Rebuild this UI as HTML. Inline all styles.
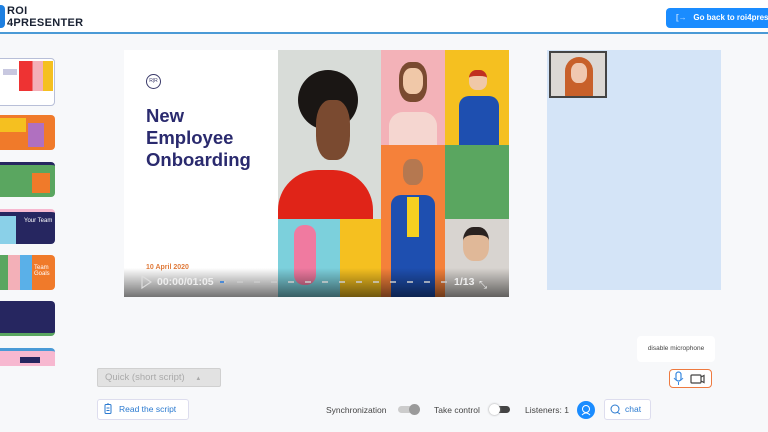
<!DOCTYPE html>
<html><head><meta charset="utf-8"><style>
*{margin:0;padding:0;box-sizing:border-box}
body{width:768px;height:432px;overflow:hidden;background:#f7f8fa;font-family:"Liberation Sans",sans-serif;position:relative}
.a{position:absolute}
.hdr{left:0;top:0;width:768px;height:34px;background:#fff;border-bottom:2px solid #4a9ad6}
.t{border-radius:4px;overflow:hidden}
</style></head><body>
<div class="a hdr"></div>
<div class="a" style="left:-6px;top:5px;width:11px;height:23px;background:#1e7fe0;border-radius:4px"></div>
<div class="a" style="left:7px;top:5px;font-weight:bold;font-size:11px;line-height:12px;color:#1a2233;letter-spacing:.3px">ROI<br>4PRESENTER</div>
<div class="a" style="left:666px;top:8px;width:110px;height:20px;background:#1a8cff;border-radius:4px;color:#fff;font-size:8px;font-weight:bold;line-height:20px;padding-left:10px;white-space:nowrap"><span style="opacity:.7">[→</span>&nbsp;&nbsp; Go back to roi4prese</div>

<div class="a t" style="left:-4px;top:58px;width:59px;height:48px;background:#fff;border:1px solid #b8bfd8">
 <div class="a" style="left:22px;top:2px;width:34px;height:30px;background:linear-gradient(90deg,#e33 0 40%,#f3b0b8 40% 70%,#f5c020 70%)"></div>
 <div class="a" style="left:6px;top:10px;width:14px;height:6px;background:#c8c8e0"></div>
</div>
<div class="a t" style="left:-4px;top:115px;width:59px;height:35px;background:#f07a2a"><div class="a" style="left:4px;top:3px;width:26px;height:14px;background:#f5c020"></div><div class="a" style="left:32px;top:8px;width:16px;height:24px;background:#b070c0"></div></div>
<div class="a t" style="left:-4px;top:162px;width:59px;height:35px;background:#5aa660;border-top:3px solid #262660"><div class="a" style="left:36px;top:8px;width:18px;height:20px;background:#f07a2a"></div></div>
<div class="a t" style="left:-4px;top:209px;width:59px;height:35px;background:#262660;border-top:3px solid #f7b8d0"><div class="a" style="left:0;top:4px;width:20px;height:28px;background:#8ad0e8"></div><div class="a" style="left:28px;top:6px;font-size:6px;color:#fff">Your Team</div></div>
<div class="a t" style="left:-4px;top:255px;width:59px;height:35px;background:#f07a2a"><div class="a" style="left:0;top:0;width:36px;height:35px;background:linear-gradient(90deg,#5aa660 0 33%,#f3b0b8 33% 66%,#5ab0e8 66%)"></div><div class="a" style="left:38px;top:10px;font-size:6px;color:#fff">Team Goals</div></div>
<div class="a t" style="left:-4px;top:301px;width:59px;height:35px;background:#262660;border-bottom:3px solid #5aa660"></div>
<div class="a" style="left:-4px;top:348px;width:59px;height:18px;background:#f7b8d0;border-top:3px solid #4a9ad6;border-radius:4px 4px 0 0"><div class="a" style="left:24px;top:6px;width:20px;height:6px;background:#262660"></div></div>

<div class="a" style="left:124px;top:50px;width:385px;height:247px;background:#fff;overflow:hidden">
 <div class="a" style="left:22px;top:24px;width:15px;height:15px;border:1px solid #3a3a6a;border-radius:50%;font-size:5px;text-align:center;line-height:13px;color:#3a3a6a">R|R</div>
 <div class="a" style="left:22px;top:55px;font-size:18.5px;font-weight:bold;line-height:22px;color:#2a2a6e">New<br>Employee<br>Onboarding</div>
 <div class="a" style="left:22px;top:214px;font-size:7px;font-weight:bold;color:#e07a3a">10 April 2020</div>
 <div class="a" style="left:154px;top:0;width:103px;height:169px;background:#d8dcd8">
   <div class="a" style="left:20px;top:20px;width:60px;height:60px;background:#1a1614;border-radius:50%"></div>
   <div class="a" style="left:38px;top:50px;width:34px;height:60px;background:#7a4a30;border-radius:40%"></div>
   <div class="a" style="left:0;top:120px;width:95px;height:49px;background:#e02418;border-radius:40px 40px 0 0"></div>
 </div>
 <div class="a" style="left:154px;top:169px;width:62px;height:78px;background:#7cd0dc"><div class="a" style="left:16px;top:6px;width:22px;height:60px;background:#f07aa0;border-radius:10px"></div></div>
 <div class="a" style="left:216px;top:169px;width:41px;height:78px;background:#f5c020"></div>
 <div class="a" style="left:257px;top:0;width:64px;height:95px;background:#f3b2b8">
   <div class="a" style="left:18px;top:12px;width:28px;height:40px;background:#7a4a30;border-radius:40%"></div>
   <div class="a" style="left:22px;top:18px;width:20px;height:26px;background:#f0c8a8;border-radius:40%"></div>
   <div class="a" style="left:8px;top:62px;width:48px;height:33px;background:#f5d6d0;border-radius:14px 14px 0 0"></div>
 </div>
 <div class="a" style="left:257px;top:95px;width:64px;height:152px;background:#f5813a">
   <div class="a" style="left:22px;top:14px;width:20px;height:26px;background:#b57850;border-radius:40%"></div>
   <div class="a" style="left:10px;top:50px;width:44px;height:102px;background:#1e4fb0;border-radius:10px 10px 0 0"></div>
   <div class="a" style="left:26px;top:52px;width:12px;height:40px;background:#f5d020"></div>
 </div>
 <div class="a" style="left:321px;top:0;width:64px;height:95px;background:#f5c020">
   <div class="a" style="left:24px;top:20px;width:18px;height:20px;background:#f0c8a8;border-radius:40%;border-top:6px solid #c03020"></div>
   <div class="a" style="left:14px;top:46px;width:40px;height:49px;background:#1e4fb0;border-radius:10px 10px 0 0"></div>
 </div>
 <div class="a" style="left:321px;top:95px;width:64px;height:74px;background:#5aa660"></div>
 <div class="a" style="left:321px;top:169px;width:64px;height:78px;background:#d8d4d0"><div class="a" style="left:18px;top:8px;width:26px;height:34px;background:#e0b898;border-radius:40%;border-top:8px solid #2a2220"></div></div>
 <div class="a" style="left:0;top:218px;width:385px;height:29px;background:linear-gradient(rgba(0,0,0,0),rgba(0,0,0,.55))"></div>
 <svg class="a" style="left:16px;top:225px" width="12" height="14"><path d="M2 1 L11 7 L2 13 Z" fill="none" stroke="#ddd" stroke-width="1.2"/></svg>
 <div class="a" style="left:33px;top:226px;font-size:10.5px;font-weight:bold;color:#eee">00:00/01:05</div>
 <svg class="a" style="left:96px;top:230px" width="230" height="4"><line x1="0" y1="2" x2="230" y2="2" stroke="#ccc" stroke-width="1.5" stroke-dasharray="6,11"/><line x1="0" y1="2" x2="4" y2="2" stroke="#4a8ad6" stroke-width="2"/></svg>
 <div class="a" style="left:330px;top:226px;font-size:10.5px;font-weight:bold;color:#eee">1/13</div>
 <div class="a" style="left:355px;top:230px;font-size:10px;color:#eee">⤡</div>
</div>

<div class="a" style="left:547px;top:50px;width:174px;height:240px;background:#d4e4f7"></div>
<div class="a" style="left:549px;top:51px;width:58px;height:47px;background:#dcd8d4;border:2px solid #444;overflow:hidden">
 <div class="a" style="left:14px;top:4px;width:28px;height:42px;background:#c8602a;border-radius:14px 14px 4px 4px"></div>
 <div class="a" style="left:20px;top:10px;width:16px;height:20px;background:#f0c8b0;border-radius:40%"></div>
</div>

<div class="a" style="left:637px;top:336px;width:78px;height:26px;background:#fff;border-radius:4px;font-size:6.5px;color:#444;text-align:center;line-height:26px">disable microphone</div>
<div class="a" style="left:669px;top:369px;width:43px;height:19px;border:1.5px solid #ee7a40;border-radius:4px;background:#fff"></div>
<svg class="a" style="left:672px;top:371px" width="36" height="15"><rect x="4" y="1" width="5" height="9" rx="2.5" fill="none" stroke="#3a8ae0" stroke-width="1.2"/><path d="M2 7 Q6.5 13 11 7 M6.5 11 V14" fill="none" stroke="#3a8ae0" stroke-width="1"/><rect x="19" y="4" width="10" height="8" rx="1" fill="none" stroke="#444" stroke-width="1.2"/><path d="M29 6 L32 4.5 V11.5 L29 10" fill="none" stroke="#444" stroke-width="1.2"/></svg>

<div class="a" style="left:97px;top:368px;width:124px;height:19px;background:#e2e2e2;border:1px solid #d0d0d0;border-radius:2px;font-size:9.5px;color:#aaa;line-height:17px;padding-left:7px">Quick (short script) <span style="font-size:6px;margin-left:8px">▲</span></div>
<div class="a" style="left:97px;top:399px;width:92px;height:21px;background:#fff;border:1px solid #dde;border-radius:3px;font-size:8.5px;color:#2a7ad0;line-height:19px;padding-left:21px">Read the script</div>
<svg class="a" style="left:104px;top:403px" width="8" height="12"><rect x="1" y="1.5" width="6" height="9" rx="1" fill="none" stroke="#2a7ad0"/><path d="M3 1h2M2.5 5h3M2.5 7.5h3" stroke="#2a7ad0"/></svg>
<div class="a" style="left:326px;top:405px;font-size:8.5px;color:#444">Synchronization</div>
<div class="a" style="left:398px;top:406px;width:20px;height:7px;background:#ccc;border-radius:4px"></div>
<div class="a" style="left:409px;top:404px;width:11px;height:11px;background:#9a9a9a;border-radius:50%"></div>
<div class="a" style="left:434px;top:405px;font-size:8.5px;color:#444">Take control</div>
<div class="a" style="left:491px;top:406px;width:19px;height:7px;background:#444;border-radius:4px"></div>
<div class="a" style="left:489px;top:404px;width:11px;height:11px;background:#fff;border-radius:50%;box-shadow:0 0 2px #999"></div>
<div class="a" style="left:525px;top:405px;font-size:8.5px;color:#444">Listeners: 1</div>
<div class="a" style="left:577px;top:401px;width:18px;height:18px;background:#1a8cff;border-radius:50%"></div>
<svg class="a" style="left:580px;top:404px" width="12" height="12"><circle cx="6" cy="5" r="3.5" fill="none" stroke="#fff"/><path d="M2 11 Q6 7 10 11" fill="none" stroke="#fff"/></svg>
<div class="a" style="left:604px;top:399px;width:47px;height:21px;background:#fff;border:1px solid #dde;border-radius:3px;font-size:8.5px;color:#2a7ad0;line-height:19px;padding-left:20px">chat</div>
<svg class="a" style="left:610px;top:404px" width="12" height="11"><circle cx="5" cy="5" r="4" fill="none" stroke="#2a7ad0"/><path d="M7 8 L10 10" stroke="#2a7ad0"/></svg>
</body></html>
